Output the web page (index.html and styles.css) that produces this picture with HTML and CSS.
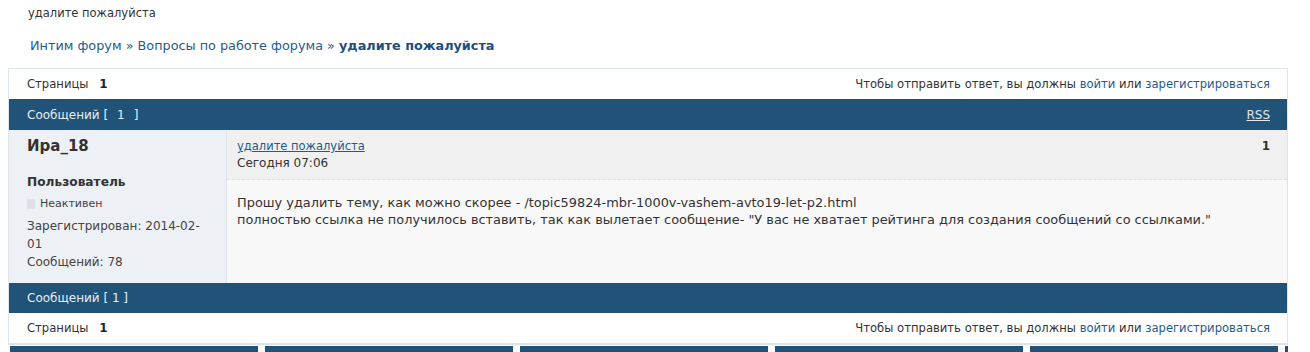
FILE: index.html
```html
<!DOCTYPE html>
<html lang="ru">
<head>
<meta charset="utf-8">
<title>удалите пожалуйста</title>
<link rel="stylesheet" href="styles.css">
</head>
<body>
<div class="page-title">удалите пожалуйста</div>
<div class="crumbs"><a href="#">Интим форум</a> » <a href="#">Вопросы по работе форума</a> » <strong><a href="#">удалите пожалуйста</a></strong></div>
<div class="topic">
  <div class="linkst">
    <div class="pages">Страницы <strong>1</strong></div>
    <div class="postlink">Чтобы отправить ответ, вы должны <a href="#">войти</a> или <a href="#">зарегистрироваться</a></div>
  </div>
  <div class="bar">
    <span>Сообщений [<span class="cnt">1</span>]</span>
    <a class="rss" href="#">RSS</a>
  </div>
  <div class="post">
    <div class="author">
      <div class="name">Ира_18</div>
      <div class="role">Пользователь</div>
      <div class="status"><span class="dot"></span>Неактивен</div>
      <div class="info info-first">Зарегистрирован: 2014-02-01</div>
      <div class="info">Сообщений: 78</div>
    </div>
    <div class="main">
      <div class="head">
        <div>
          <a class="subj" href="#">удалите пожалуйста</a>
          <div class="date">Сегодня 07:06</div>
        </div>
        <div class="num">1</div>
      </div>
      <div class="body">
        <p>Прошу удалить тему, как можно скорее - /topic59824-mbr-1000v-vashem-avto19-let-p2.html<br>полностью ссылка не получилось вставить, так как вылетает сообщение- "У вас не хватает рейтинга для создания сообщений со ссылками."</p>
      </div>
    </div>
  </div>
  <div class="bar bar-bottom">
    <span>Сообщений [ 1 ]</span>
  </div>
  <div class="linkst">
    <div class="pages">Страницы <strong>1</strong></div>
    <div class="postlink">Чтобы отправить ответ, вы должны <a href="#">войти</a> или <a href="#">зарегистрироваться</a></div>
  </div>
</div>
<div class="tiles">
  <div class="tile"></div>
  <div class="tile"></div>
  <div class="tile"></div>
  <div class="tile"></div>
  <div class="tile"></div>
  <div class="tile tile-cut"></div>
</div>
</body>
</html>
```
FILE: styles.css
```css
html, body {
  margin: 0;
  padding: 0;
  background: #fff;
  font-family: "DejaVu Sans", Verdana, sans-serif;
  font-size: 12px;
  color: #333;
  overflow: hidden;
}
a { color: #1f5b8c; text-decoration: none; }

.page-title {
  padding: 5px 0 0 28px;
  line-height: 16px;
  font-size: 11.5px;
  color: #333;
}
.crumbs {
  padding: 16px 0 0 30px;
  line-height: 17px;
  font-size: 12.8px;
  color: #1f5b8c;
}
.crumbs strong a { color: #1a4f80; }

.topic {
  margin: 14px 0 0 8px;
  width: 1280px;
  box-sizing: border-box;
  border: 1px solid #dde4ec;
  border-bottom-width: 2px;
}
.linkst {
  display: flex;
  justify-content: space-between;
  align-items: center;
  height: 30px;
  padding: 0 17px 0 18px;
  background: #fff;
  font-size: 11.6px;
}
.pages { color: #333; }
.pages strong { margin-left: 7px; color: #222; font-size: 12px; }
.postlink { color: #333; }

.bar {
  display: flex;
  justify-content: space-between;
  align-items: center;
  height: 31px;
  padding: 0 17px 0 18px;
  background: #215379;
  color: #e8eef4;
}
.cnt { margin: 0 9px; }
.bar-bottom { height: 30px; }
.rss { color: #dfe7ef; text-decoration: underline; }

.post {
  display: flex;
  min-height: 153px;
}
.author {
  width: 199px;
  padding: 6px 0 0 18px;
  background: #edf0f5;
  border-right: 1px solid #dde3ea;
  line-height: 18px;
}
.name {
  font-size: 15px;
  font-weight: bold;
  color: #333;
  line-height: 20px;
}
.role {
  margin-top: 17px;
  font-weight: bold;
  font-size: 12.2px;
  color: #333;
}
.status {
  display: flex;
  align-items: center;
  margin-top: 4px;
  font-size: 11px;
  color: #444;
}
.dot {
  width: 8px;
  height: 10px;
  background: #dce1e7;
  margin-right: 5px;
}
.info { padding-right: 16px; color: #444; }
.info-first { margin-top: 4px; }

.main {
  flex: 1;
  display: flex;
  flex-direction: column;
  background: #f8f8f8;
}
.head {
  display: flex;
  justify-content: space-between;
  height: 50px;
  padding: 8px 17px 0 10px;
  box-sizing: border-box;
  background: #f0f0f0;
  border-bottom: 1px dashed #dcdfe3;
  line-height: 17px;
}
.subj { color: #1f5b8c; text-decoration: underline; font-size: 11.5px; }
.date { color: #333; }
.num { font-weight: bold; color: #333; }
.body {
  flex: 1;
  padding: 14px 10px 0;
}
.body p {
  margin: 0;
  font-size: 12.9px;
  line-height: 17px;
  color: #333;
}

.tiles {
  display: flex;
  gap: 7px;
  margin: 1px 0 0 10px;
  overflow: hidden;
}
.tile {
  flex: none;
  width: 248px;
  height: 20px;
  background: #215379;
}
.tile-cut { width: 3px; }
```
